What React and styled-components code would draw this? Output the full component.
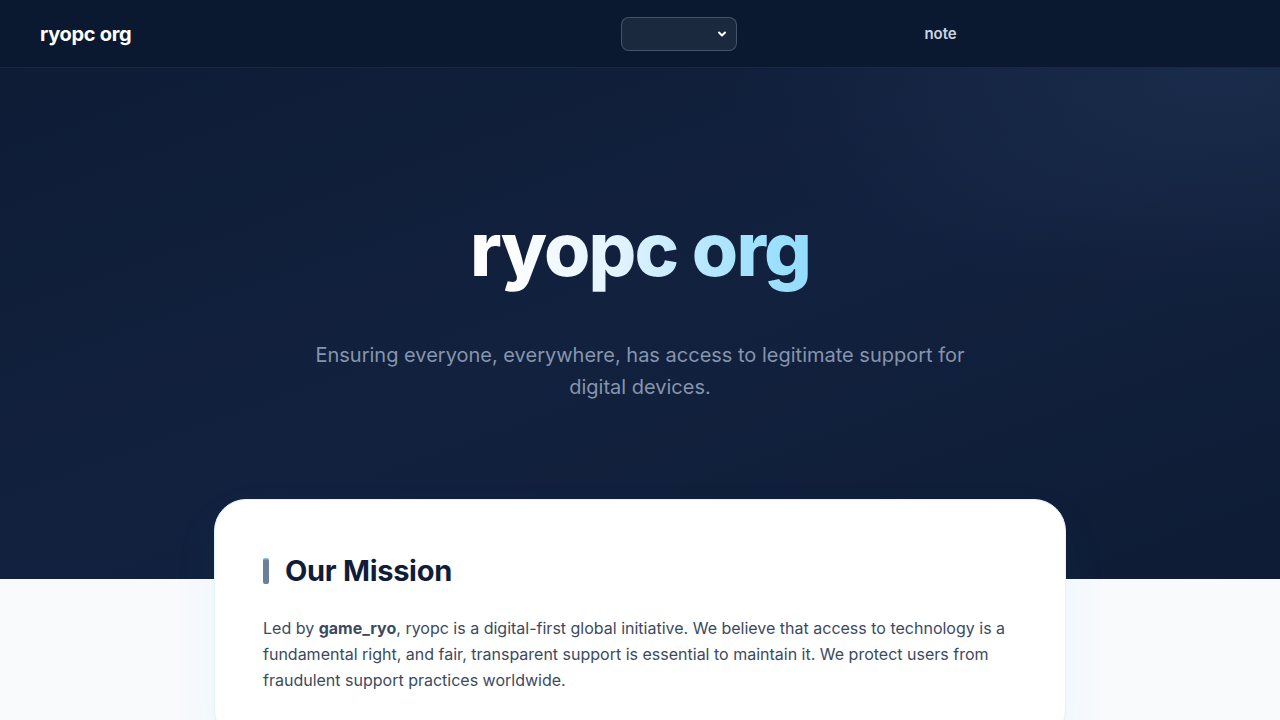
import React from 'react'
import styled, { createGlobalStyle } from 'styled-components';

const GlobalStyle = createGlobalStyle`
    * { box-sizing: border-box; }
    body {
        margin: 0;
        font-family: Inter, "Noto Sans", sans-serif;
        background: #f8fafc;
        color: #334155;
        -webkit-font-smoothing: antialiased;
    }
`

const Header = styled.header`
    height: 68px;
    display: flex;
    align-items: center;
    padding: 0 40px;
    background: #0b1930;
    border-bottom: 1px solid rgba(148, 163, 184, 0.12);
`
const Logo = styled.div`
    font-size: 20px;
    font-weight: 700;
    color: #fff;
    letter-spacing: -0.015em;
`
const LangSelect = styled.select`
    margin-left: 490px;
    width: 116px;
    height: 34px;
    border-radius: 8px;
    border: 1px solid rgba(148, 163, 184, 0.35);
    background: rgba(51, 65, 85, 0.4);
    color: #fff;
    font-family: Inter, sans-serif;
    font-size: 14px;
    padding: 0 8px;
    appearance: none;
    background-image: url("data:image/svg+xml;utf8,<svg xmlns='http://www.w3.org/2000/svg' width='12' height='12' viewBox='0 0 24 24' fill='none' stroke='white' stroke-width='4' stroke-linecap='round' stroke-linejoin='round'><path d='M6 9l6 6 6-6'/></svg>");
    background-repeat: no-repeat;
    background-position: right 8px center;
`
const NavLink = styled.a`
    margin-left: 187px;
    font-size: 15px;
    font-weight: 600;
    color: #cbd5e1;
    text-decoration: none;
`

const Hero = styled.section`
    background:
        radial-gradient(ellipse 55% 65% at 95% 0%, rgba(34, 54, 88, 0.5), transparent 70%),
        linear-gradient(160deg, #0e1c36 0%, #12213e 50%, #0e1c35 100%);
    padding: 137px 24px 176px;
    text-align: center;
`
const Title = styled.h1`
    margin: 0;
    font-size: 75px;
    line-height: 88px;
    font-weight: 800;
    letter-spacing: -0.025em;
    background: linear-gradient(90deg, #ffffff 10%, #e0f2fe 45%, #a5e3fd 80%, #93dcfc 100%);
    background-clip: text;
    -webkit-background-clip: text;
    color: transparent;
    display: inline-block;
`
const Subtitle = styled.p`
    margin: 46px auto 0;
    max-width: 670px;
    font-size: 20px;
    line-height: 32px;
    color: #8595ad;
`

const CardWrap = styled.section`
    display: flex;
    justify-content: center;
    margin-top: -80px;
    padding: 0 24px 80px;
`
const Card = styled.div`
    width: 852px;
    background: #fff;
    border: 1px solid #e0f2fe;
    border-radius: 32px;
    padding: 51px 48px 48px;
    box-shadow: 0 20px 50px rgba(14, 165, 233, 0.06);
`
const CardTitle = styled.h2`
    margin: 0;
    display: flex;
    align-items: center;
    gap: 16px;
    font-size: 29px;
    line-height: 40px;
    font-weight: 700;
    color: #0f1d38;
    letter-spacing: -0.01em;
    &::before {
        content: '';
        width: 6px;
        height: 26px;
        border-radius: 2px;
        background: linear-gradient(180deg, #7dd3fc 0, #6b7f9b 10%, #6b7f9b 100%);
    }
`
const CardText = styled.p`
    margin: 24px 0 0;
    font-size: 16px;
    line-height: 26px;
    color: #3b4a61;
    b { font-weight: 700; }
`

export default function App() {
    return (
        <>
            <GlobalStyle />
            <Header>
                <Logo>ryopc org</Logo>
                <LangSelect defaultValue="">
                    <option value=""></option>
                </LangSelect>
                <NavLink href="#">note</NavLink>
            </Header>
            <Hero>
                <Title>ryopc org</Title>
                <Subtitle>Ensuring everyone, everywhere, has access to legitimate support for digital devices.</Subtitle>
            </Hero>
            <CardWrap>
                <Card>
                    <CardTitle>Our Mission</CardTitle>
                    <CardText>
                        Led by <b>game_ryo</b>, ryopc is a digital-first global initiative. We believe that access to technology is a fundamental right, and fair, transparent support is essential to maintain it. We protect users from fraudulent support practices worldwide.
                    </CardText>
                </Card>
            </CardWrap>
        </>
    );
}
